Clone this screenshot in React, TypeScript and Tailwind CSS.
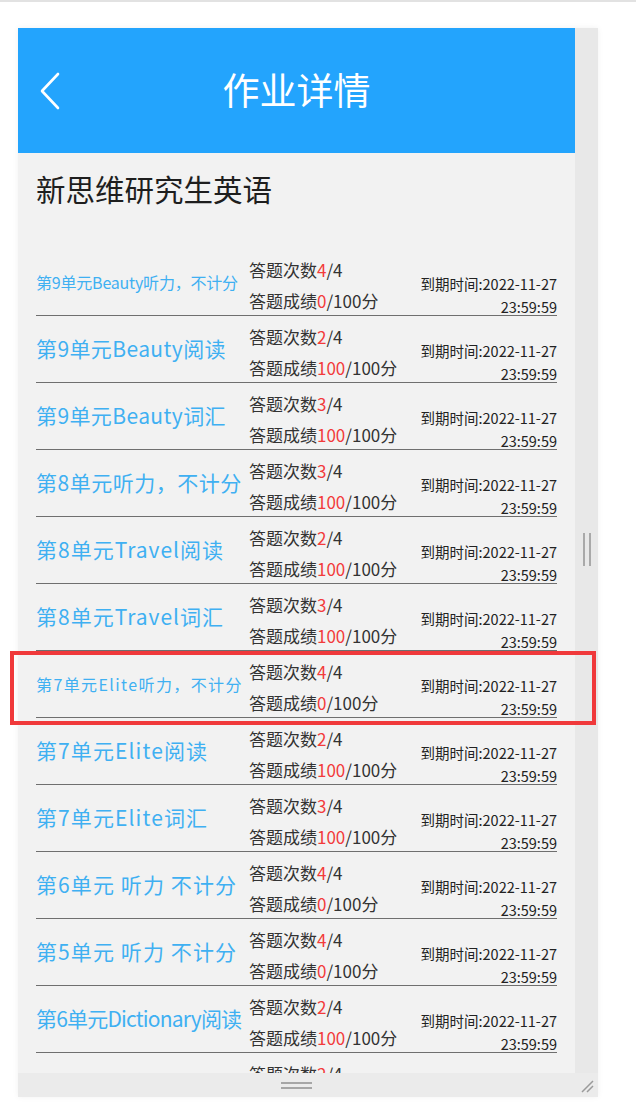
import React from "react";

type Work = {
  name: string;
  cls: string;
  times: string;
  score: string;
};

// each title is squeezed or spread to fit its column, as on the device
const works: Work[] = [
  { name: "第9单元Beauty听力，不计分", cls: "text-[16px] tracking-[-0.2px]", times: "4", score: "0" },
  { name: "第9单元Beauty阅读", cls: "text-[21px] tracking-[0.4px]", times: "2", score: "100" },
  { name: "第9单元Beauty词汇", cls: "text-[21px] tracking-[0.4px]", times: "3", score: "100" },
  { name: "第8单元听力，不计分", cls: "text-[21px] tracking-[0.5px]", times: "3", score: "100" },
  { name: "第8单元Travel阅读", cls: "text-[21px] tracking-[1px]", times: "2", score: "100" },
  { name: "第8单元Travel词汇", cls: "text-[21px] tracking-[1px]", times: "3", score: "100" },
  { name: "第7单元Elite听力，不计分", cls: "text-[16px] tracking-[1.4px]", times: "4", score: "0" },
  { name: "第7单元Elite阅读", cls: "text-[21px] tracking-[1.1px]", times: "2", score: "100" },
  { name: "第7单元Elite词汇", cls: "text-[21px] tracking-[1.1px]", times: "3", score: "100" },
  { name: "第6单元 听力 不计分", cls: "text-[21px] tracking-[1.1px]", times: "4", score: "0" },
  { name: "第5单元 听力 不计分", cls: "text-[21px] tracking-[1.1px]", times: "4", score: "0" },
  { name: "第6单元Dictionary阅读", cls: "text-[21px] tracking-[-0.8px]", times: "2", score: "100" },
  { name: "第6单元Dictionary词汇", cls: "text-[21px] tracking-[-0.8px]", times: "2", score: "100" },
];

const font = { fontFamily: '"Noto Sans CJK SC", "Noto Sans", sans-serif' };

function WorkRow({ w }: { w: Work }) {
  return (
    <div className="mx-[18px] h-[67px] flex items-center border-b border-[#6f6f6f] shrink-0">
      <div className={"w-[213px] shrink-0 text-[#3fb0f2] whitespace-nowrap " + w.cls}>{w.name}</div>
      <div className="flex flex-col text-[17px] leading-[31px] text-[#333] mt-[6px]">
        <div>
          答题次数<span className="text-[#f23b3b]">{w.times}</span>/4
        </div>
        <div>
          答题成绩<span className="text-[#f23b3b]">{w.score}</span>/100分
        </div>
      </div>
      <div className="ml-auto flex flex-col items-end text-[14.5px] text-[#222] leading-[23px] pt-[25px]">
        <div>到期时间:2022-11-27</div>
        <div>23:59:59</div>
      </div>
    </div>
  );
}

export default function App() {
  return (
    <div className="w-[636px] h-[1119px] bg-white relative overflow-hidden border-t-2 border-[#e2e2e2]" style={font}>
      <div className="pt-[26px] pl-[18px]">
        <div className="w-[580px] h-[1069px] flex flex-col shadow-[0_0_6px_rgba(0,0,0,0.06)]">
          <div className="flex flex-1 min-h-0">
            {/* main screen */}
            <div className="w-[557px] flex flex-col bg-[#f2f2f2] overflow-hidden">
              <div className="h-[125px] shrink-0 bg-[#23a4fd] flex items-center relative">
                <svg className="absolute left-[21px] top-[44px]" width="22" height="38" viewBox="0 0 22 38">
                  <path d="M19 2 L3 19 L19 36" fill="none" stroke="white" strokeWidth="2.6" strokeLinecap="round" strokeLinejoin="round" />
                </svg>
                <div className="w-full text-center text-white text-[37px] mt-[-2px]">作业详情</div>
              </div>
              <div className="h-[96px] shrink-0 pl-[18px] pt-[16px] text-[29.5px] leading-[38px] text-[#1e1e1e]">
                新思维研究生英语
              </div>
              {works.map((w, i) => (
                <WorkRow key={i} w={w} />
              ))}
            </div>
            {/* scrollbar */}
            <div className="w-[23px] bg-[#e8e8e8] pt-[505px] flex justify-center">
              <div className="w-[8px] h-[33px] flex justify-between">
                <div className="w-[2px] h-full bg-[#a9a9a9]" />
                <div className="w-[2px] h-full bg-[#a9a9a9]" />
              </div>
            </div>
          </div>
          {/* bottom bar */}
          <div className="h-[24px] bg-[#ebebeb] flex items-center relative pl-[263px]">
            <div className="w-[31px] flex flex-col gap-[3px]">
              <div className="h-[2px] bg-[#a6a6a6]" />
              <div className="h-[2px] bg-[#a6a6a6]" />
            </div>
            <svg className="absolute right-[4px] bottom-[4px]" width="14" height="14" viewBox="0 0 14 14">
              <path d="M13 2 L2 13 M13 7 L7 13" stroke="#9a9a9a" strokeWidth="1.5" />
            </svg>
          </div>
        </div>
      </div>
      {/* annotation box */}
      <div className="absolute left-[10px] top-[649px] w-[586px] h-[74px] border-4 border-[#f0393b]" />
    </div>
  );
}
